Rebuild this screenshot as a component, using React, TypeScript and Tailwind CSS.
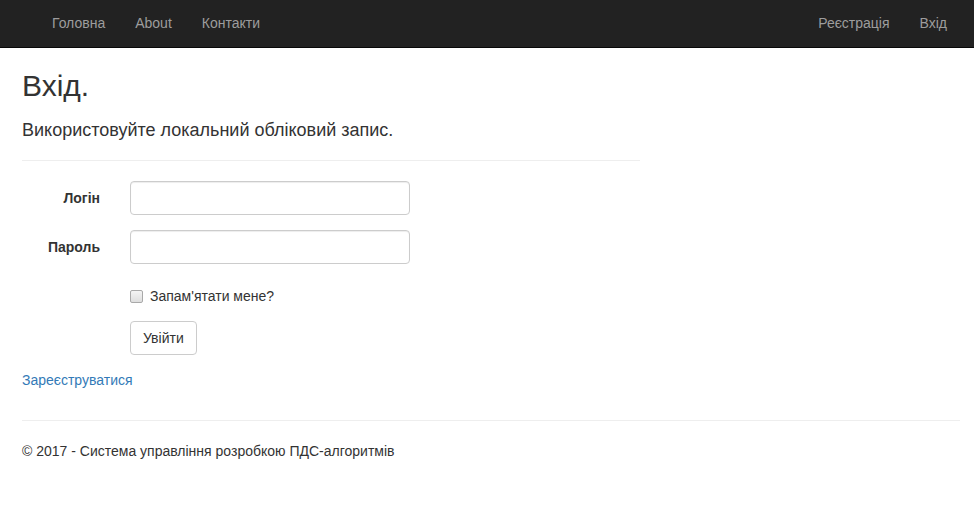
import React from "react";

export default function App() {
  const font = { fontFamily: '"Liberation Sans", Arial, sans-serif' };
  return (
    <div className="min-h-[512px] bg-white text-[14px] leading-[20px] text-[#333]" style={font}>
      <nav className="flex h-[48px] items-center justify-between border-b border-[#080808] bg-[#222] pl-[37px] pr-[12px]">
        <ul className="flex">
          {["Головна", "About", "Контакти"].map((t) => (
            <li key={t}>
              <a className="block px-[15px] pb-[2px] text-[#9d9d9d]">{t}</a>
            </li>
          ))}
        </ul>
        <ul className="flex">
          {["Реєстрація", "Вхід"].map((t) => (
            <li key={t}>
              <a className="block px-[15px] pb-[2px] text-[#9d9d9d]">{t}</a>
            </li>
          ))}
        </ul>
      </nav>
      <main className="pl-[22px] pr-[14px]">
        <h2 className="pt-[21px] text-[30px] leading-[33px] font-normal">Вхід.</h2>
        <div className="w-[618px] pb-[10px]">
          <h4 className="mt-[18px] text-[18px] leading-[20px] font-normal">Використовуйте локальний обліковий запис.</h4>
          <hr className="mt-[20px] mb-[20px] border-t border-[#eee]" />
          <form className="flex flex-col">
            <div className="mb-[15px] flex items-start">
              <label className="w-[78px] pt-[7px] text-right font-bold">Логін</label>
              <input className="ml-[30px] h-[34px] w-[280px] rounded-[4px] border border-[#ccc] px-[12px] shadow-[inset_0_1px_1px_rgba(0,0,0,0.075)]" />
            </div>
            <div className="mb-[15px] flex items-start">
              <label className="w-[78px] pt-[7px] text-right font-bold">Пароль</label>
              <input type="password" className="ml-[30px] h-[34px] w-[280px] rounded-[4px] border border-[#ccc] px-[12px] shadow-[inset_0_1px_1px_rgba(0,0,0,0.075)]" />
            </div>
            <div className="mb-[15px] min-h-[27px] pl-[108px] pt-[7px]">
              <label className="flex items-center gap-[7px]">
                <span className="inline-block h-[13px] w-[13px] rounded-[2px] border border-[#a9a9a9] bg-gradient-to-b from-[#f4f4f4] to-[#dedede]" />
                <span>Запам'ятати мене?</span>
              </label>
            </div>
            <div className="mb-[15px] pl-[108px]">
              <button type="button" className="h-[34px] rounded-[4px] border border-[#ccc] bg-white px-[12px] text-[#333]">Увійти</button>
            </div>
          </form>
          <p>
            <a className="text-[#337ab7]">Зареєструватися</a>
          </p>
        </div>
        <hr className="mt-[20px] mb-[20px] border-t border-[#eee]" />
        <footer>
          <p>© 2017 - Система управління розробкою ПДС-алгоритмів</p>
        </footer>
      </main>
    </div>
  );
}
